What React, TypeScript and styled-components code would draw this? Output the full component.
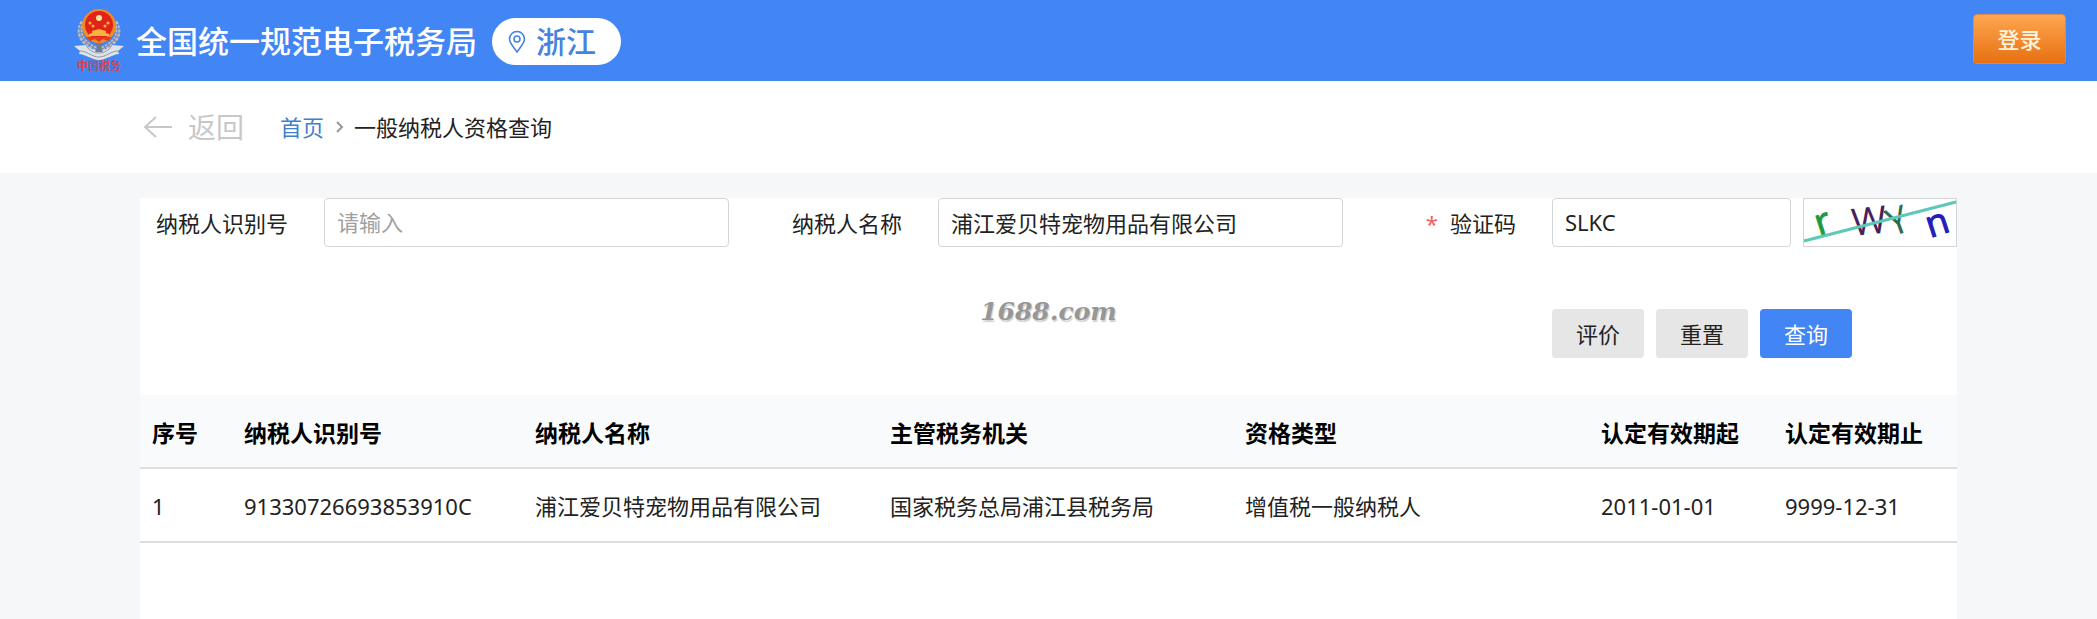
import React from 'react';
import styled, { createGlobalStyle, css } from 'styled-components';

const GlobalStyle = createGlobalStyle`
  *, *::before, *::after { box-sizing: border-box; }
  body {
    margin: 0;
    background: #f6f7f9;
    color: #222;
    font: 22px/32px "Noto Sans", "Noto Sans CJK SC", sans-serif;
  }
  button, input { font: inherit; color: inherit; }
  a { text-decoration: none; }
`;

const Page = styled.div`
  min-height: 100vh;
  display: flex;
  flex-direction: column;
`;

const Header = styled.header`
  display: flex;
  align-items: center;
  height: 81px;
  padding: 0 31px 4px 72px;
  background: #4285f5;
`;

const Emblem = styled.svg`
  flex: none;
  width: 54px;
  height: 66px;
  margin-top: 2px;
`;

const SiteTitle = styled.h1`
  margin: 4px 15px 0 10px;
  font-size: 31px;
  line-height: 40px;
  font-weight: 500;
  color: #fff;
  white-space: nowrap;
`;

const Region = styled.button`
  display: flex;
  align-items: center;
  gap: 10px;
  height: 47px;
  margin-top: 6px;
  padding: 0 25px 0 16px;
  border: 0;
  border-radius: 24px;
  background: #fff;
  color: #4583e0;
  font-size: 30px;
  line-height: 40px;
  font-weight: 500;
  white-space: nowrap;
`;

const PinIcon = styled.svg`
  width: 18px;
  height: 24px;
`;

const Login = styled.button`
  margin-left: auto;
  width: 93px;
  height: 50px;
  border: 1px solid #d98a4c;
  border-radius: 4px;
  background: linear-gradient(#fda650, #e87012);
  color: #fff3dc;
  font-weight: 500;
`;

const Crumbs = styled.nav`
  display: flex;
  align-items: center;
  height: 92px;
  padding: 0 140px 0 143px;
  background: #fff;
`;

const Back = styled.a`
  display: flex;
  align-items: center;
  gap: 15px;
  margin-right: 36px;
  color: #c8c8c8;
  font-size: 28px;
  line-height: 40px;
`;

const BackArrow = styled.svg`
  width: 30px;
  height: 24px;
`;

const HomeLink = styled.a`
  color: #3f7fd0;
`;

const Chevron = styled.svg`
  width: 8px;
  height: 14px;
  margin: 0 10px 0 12px;
`;

const Panel = styled.main`
  position: relative;
  flex: 1;
  margin: 25px 140px 0;
  background: #fff;
`;

const Form = styled.form`
  display: grid;
  grid-template-columns: 184px 1fr 209px 1fr 209px 1fr;
  row-gap: 61px;
  padding-bottom: 37px;
`;

const Label = styled.label`
  padding-right: 36px;
  line-height: 50px;
  text-align: right;
  white-space: nowrap;
`;

const Required = styled.span`
  margin-right: 12px;
  color: #f06060;
`;

const TextInput = styled.input`
  width: 100%;
  min-width: 0;
  height: 49px;
  padding: 0 12px 2px;
  border: 1px solid #d5d5d5;
  border-radius: 4px;
  background: #fff;
  outline: 0;
  &::placeholder { color: #a0a0a0; opacity: 1; }
`;

const CodeGroup = styled.div`
  display: flex;
  gap: 12px;
  height: 49px;
`;

const CaptchaButton = styled.button`
  flex: none;
  width: 154px;
  height: 49px;
  padding: 0;
  border: 1px solid #d5d5d5;
  background: #fff;
`;

const CaptchaImage = styled.svg`
  display: block;
  width: 152px;
  height: 47px;
  overflow: visible;
  font-family: "Open Sans", sans-serif;
`;

const Actions = styled.div`
  grid-column: 6;
  display: flex;
  gap: 12px;
`;

const ActionButton = styled.button<{ $primary?: boolean }>`
  width: 92px;
  height: 49px;
  padding: 0;
  border: 0;
  border-radius: 4px;
  background: #e6e6e6;
  ${(p) => p.$primary && css`
    background: #4285f5;
    color: #fff;
  `}
`;

const Watermark = styled.span`
  position: absolute;
  top: 98px;
  left: 50%;
  transform: translateX(-50%);
  color: #979797;
  font: italic bold 25px/32px "DejaVu Serif", serif;
  text-shadow: 1px 2px 1px #d0d0d0;
  pointer-events: none;
`;

const Table = styled.table`
  width: 100%;
  table-layout: fixed;
  border-collapse: collapse;
  text-align: left;
`;

const HeadCell = styled.th`
  height: 73px;
  padding: 4px 12px 0;
  border-bottom: 2px solid #dcdfe0;
  background: #f9fafc;
  color: #000;
  font-size: 23px;
  font-weight: 700;
  white-space: nowrap;
`;

const Cell = styled.td`
  height: 74px;
  padding: 2px 12px 0;
  border-bottom: 2px solid #dcdfe0;
  white-space: nowrap;
`;

const columns = [
  { title: '序号', width: 92 },
  { title: '纳税人识别号', width: 291 },
  { title: '纳税人名称', width: 355 },
  { title: '主管税务机关', width: 355 },
  { title: '资格类型', width: 356 },
  { title: '认定有效期起', width: 184 },
  { title: '认定有效期止', width: 184 },
];

const totalWidth = columns.reduce((sum, c) => sum + c.width, 0);

const rows = [
  ['1', '91330726693853910C', '浦江爱贝特宠物用品有限公司', '国家税务总局浦江县税务局', '增值税一般纳税人', '2011-01-01', '9999-12-31'],
];

function TaxEmblem() {
  return (
    <Emblem viewBox="0 0 54 66" role="img" aria-label="中国税务">
      <g fill="none" stroke="#b9bcc0" strokeWidth="5" strokeDasharray="3 1">
        <path d="M11 15C5 25 8 35 24 42" />
        <path d="M43 15C49 25 46 35 30 42" />
      </g>
      <g fill="none" stroke="#7e8795" strokeWidth="1">
        <path d="M9 17C6 26 10 35 24 42" />
        <path d="M45 17C48 26 44 35 30 42" />
      </g>
      <path d="M2 39l12-1c4 4 9 6 13 6s9-2 13-6l12 1-6 5 1 3c-6 0-13 6-20 6S13 47 7 47l1-3z" fill="#dfe3e8" />
      <path d="M14 38c3 6 8 8 13 8s10-2 13-8M8 44c7 0 12 6 19 6s12-6 19-6" fill="none" stroke="#9299a3" strokeWidth="1" />
      <path d="M24 37h6l-1 5 2 3h-8l2-3z" fill="#6f7d92" />
      <circle cx="27" cy="19" r="17" fill="#f18a27" />
      <circle cx="27" cy="18" r="14" fill="#e2231a" />
      <circle cx="27" cy="11" r="3" fill="#fbe3a0" />
      <g fill="#f6b53c">
        <circle cx="18" cy="16" r="1.5" />
        <circle cx="21" cy="19" r="1.5" />
        <circle cx="36" cy="16" r="1.5" />
        <circle cx="33" cy="19" r="1.5" />
        <path d="M17 27l3-1v-2l7-2 7 2v2l3 1v2H17z" />
      </g>
      <path d="M14 30h26l-4 4-5-2-4 3-4-3-5 2z" fill="#e33a1c" />
      <text x="5" y="63" fontSize="11" fontWeight="700" fill="#d8414b">中国税务</text>
    </Emblem>
  );
}

function Captcha() {
  return (
    <CaptchaImage viewBox="0 0 152 47" aria-hidden="true">
      <g strokeWidth="1">
        <text transform="translate(15 37) rotate(-18)" fontSize="37" fill="#1c9a3c" stroke="#1c9a3c">r</text>
        <text transform="translate(49 37) rotate(-6)" fontSize="38" fill="#4a1f58">W</text>
        <text transform="translate(88 38) rotate(-20)" fontSize="38" fill="#2f6b4c">Y</text>
        <text transform="translate(126 39) rotate(-18)" fontSize="37" fill="#2020b8" stroke="#2020b8">n</text>
      </g>
      <path d="M0 42L152 3" stroke="#5cc8b8" strokeWidth="3" />
    </CaptchaImage>
  );
}

export default function App() {
  return (
    <Page>
      <GlobalStyle />
      <Header>
        <TaxEmblem />
        <SiteTitle>全国统一规范电子税务局</SiteTitle>
        <Region type="button">
          <PinIcon viewBox="0 0 18 24" fill="none" stroke="currentColor" strokeWidth="1.6" aria-hidden="true">
            <path d="M9 22C5 16.500 1.500 12.800 1.500 9a7.500 7.500 0 0 1 15 0c0 3.800-3.500 7.500-7.500 13z" />
            <circle cx="9" cy="9" r="3" />
          </PinIcon>
          浙江
        </Region>
        <Login type="button">登录</Login>
      </Header>

      <Crumbs aria-label="面包屑">
        <Back href="#back">
          <BackArrow viewBox="0 0 30 24" fill="none" stroke="currentColor" strokeWidth="2" aria-hidden="true">
            <path d="M29 12H2M13 2L2 12l11 10" />
          </BackArrow>
          返回
        </Back>
        <HomeLink href="#home">首页</HomeLink>
        <Chevron viewBox="0 0 8 14" fill="none" stroke="#999" strokeWidth="2" aria-hidden="true">
          <path d="M1 2l5 5-5 5" />
        </Chevron>
        <span>一般纳税人资格查询</span>
      </Crumbs>

      <Panel>
        <Form onSubmit={(e) => e.preventDefault()}>
          <Label htmlFor="taxpayer-id">纳税人识别号</Label>
          <TextInput id="taxpayer-id" placeholder="请输入" />
          <Label htmlFor="taxpayer-name">纳税人名称</Label>
          <TextInput id="taxpayer-name" defaultValue="浦江爱贝特宠物用品有限公司" />
          <Label htmlFor="code"><Required>*</Required>验证码</Label>
          <CodeGroup>
            <TextInput id="code" defaultValue="SLKC" />
            <CaptchaButton type="button" aria-label="换一张验证码"><Captcha /></CaptchaButton>
          </CodeGroup>
          <Actions>
            <ActionButton type="button">评价</ActionButton>
            <ActionButton type="reset">重置</ActionButton>
            <ActionButton type="submit" $primary>查询</ActionButton>
          </Actions>
        </Form>
        <Watermark>1688.com</Watermark>

        <Table>
          <colgroup>
            {columns.map((c) => (
              <col key={c.title} style={{ width: `${(c.width / totalWidth) * 100}%` }} />
            ))}
          </colgroup>
          <thead>
            <tr>{columns.map((c) => <HeadCell key={c.title} scope="col">{c.title}</HeadCell>)}</tr>
          </thead>
          <tbody>
            {rows.map((row) => (
              <tr key={row[0]}>{row.map((value, i) => <Cell key={columns[i].title}>{value}</Cell>)}</tr>
            ))}
          </tbody>
        </Table>
      </Panel>
    </Page>
  );
}
